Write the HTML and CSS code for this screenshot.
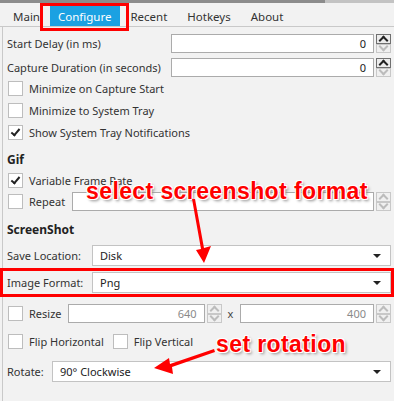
FILE: index.html
```html
<!DOCTYPE html>
<html lang="en">
<head>
    <meta charset="UTF-8">
    <title>Configure</title>
    <link rel="stylesheet" href="styles.css">
</head>
<body>
    <div class="topbar"></div>
    <div class="tabs">
        <span class="tab">Main</span>
        <span class="tab active">Configure</span>
        <span class="tab">Recent</span>
        <span class="tab">Hotkeys</span>
        <span class="tab">About</span>
    </div>

    <div class="panel">
        <div class="field">
            <label class="label wide">Start Delay (in ms)</label>
            <div class="number"><span class="value">0</span></div>
            <div class="spin"><span class="up"></span><span class="down"></span></div>
        </div>
        <div class="field gap">
            <label class="label wide">Capture Duration (in seconds)</label>
            <div class="number"><span class="value">0</span></div>
            <div class="spin"><span class="up"></span><span class="down"></span></div>
        </div>
        <div class="check"><span class="box"></span>Minimize on Capture Start</div>
        <div class="check"><span class="box"></span>Minimize to System Tray</div>
        <div class="check"><span class="box checked"></span>Show System Tray Notifications</div>

        <h3 class="heading">Gif</h3>
        <div class="check"><span class="box checked"></span>Variable Frame Rate</div>
        <div class="check repeat">
            <span class="box"></span><span class="check-text">Repeat</span>
            <div class="number disabled"></div>
            <div class="spin off"><span class="up"></span><span class="down"></span></div>
        </div>

        <h3 class="heading shot">ScreenShot</h3>
        <div class="field combo-row">
            <label class="label mid">Save Location:</label>
            <div class="combo">Disk</div>
        </div>
        <div class="highlight">
            <div class="field combo-row">
                <label class="label mid">Image Format:</label>
                <div class="combo">Png</div>
            </div>
        </div>
        <div class="check resize">
            <span class="box"></span><span class="check-text">Resize</span>
            <div class="number disabled small"><span class="value">640</span></div>
            <div class="spin off"><span class="up"></span><span class="down"></span></div>
            <span class="times">x</span>
            <div class="number disabled"><span class="value">400</span></div>
            <div class="spin off"><span class="up"></span><span class="down"></span></div>
        </div>
        <div class="check flips">
            <span class="box"></span><span class="check-text">Flip Horizontal</span>
            <span class="box second"></span><span class="check-text">Flip Vertical</span>
        </div>
        <div class="field combo-row rotate">
            <label class="label short">Rotate:</label>
            <div class="combo">90° Clockwise</div>
        </div>
    </div>

    <!-- annotations drawn over the screenshot -->
    <div class="tab-mark"></div>
    <div class="note note-format">select screenshot format</div>
    <div class="note note-rotate">set rotation</div>
    <svg class="arrows" width="394" height="401" viewBox="0 0 394 401">
        <polygon points="192,199 195,199 204,248 211,246 204,263 196,250 201,249" fill="#f00"/>
        <polygon points="214,349 215,352 172,367 173,374 154,368 169,358 170,364" fill="#f00"/>
    </svg>
</body>
</html>
```

FILE: styles.css
```css
body {
    margin: 0;
    width: 394px;
    height: 401px;
    overflow: hidden;
    position: relative;
    background-color: #f2f2f2;
    font-family: "Noto Sans", "Open Sans", sans-serif;
    font-size: 11px;
    color: #333;
}
.topbar {
    height: 3px;
    background: linear-gradient(to right, #8c8c8c 0, #8c8c8c 325px, #c3c3c3 325px);
}
.tabs {
    display: flex;
    height: 23px;
    align-items: flex-end;
    padding-left: 3px;
    border-bottom: 1px solid #c9c9c9;
    font-size: 11.5px;
}
.tab {
    padding: 0 10px;
    height: 20px;
    line-height: 22px;
    color: #333;
}
.tab.active {
    background-color: #1ba1e2;
    color: white;
    padding: 0 9px 0 8px;
}
.panel {
    border-left: 1px solid #c9c9c9;
    margin-left: 2px;
    padding: 7px 3px 0 4px;
    height: 380px;
}
.field {
    display: flex;
    align-items: center;
    height: 19px;
}
.field.gap {
    margin-top: 5px;
}
.label {
    flex: none;
}
.label.wide {
    width: 164px;
}
.label.mid {
    width: 85px;
}
.label.short {
    width: 45px;
}
.number {
    flex: 1;
    height: 17px;
    border: 1px solid #ababab;
    background: white;
    text-align: right;
    line-height: 17px;
    padding-right: 7px;
    color: #222;
}
.number.disabled {
    color: #8a8a8a;
}
.number.small {
    flex: none;
    width: 128px;
}
.spin {
    flex: none;
    width: 15px;
    height: 19px;
    margin-left: 2px;
    display: flex;
    flex-direction: column;
    justify-content: space-between;
}
.spin span {
    height: 8px;
    border: 1px solid #707070;
    background: #ececec;
    position: relative;
}
.spin span::after {
    content: "";
    position: absolute;
    left: 3px;
    top: 2px;
    width: 5px;
    height: 5px;
    border-left: 2px solid #222;
    border-top: 2px solid #222;
    transform: rotate(45deg);
}
.spin .down {
    border-color: #c8c8c8;
    background: #f0f0f0;
}
.spin .down::after {
    top: -2px;
    border-color: #bcbcbc;
    transform: rotate(225deg);
}
.spin.off .up {
    border-color: #c8c8c8;
    background: #f0f0f0;
}
.spin.off .up::after {
    border-color: #bcbcbc;
}
.check {
    display: flex;
    align-items: center;
    height: 22px;
    padding-left: 1px;
}
.box {
    flex: none;
    width: 13px;
    height: 13px;
    border: 1px solid #bdbdbd;
    background: white;
    margin-right: 6px;
    position: relative;
}
.box.checked::after {
    content: "";
    position: absolute;
    left: 4px;
    top: 1px;
    width: 3px;
    height: 7px;
    border-right: 2px solid #222;
    border-bottom: 2px solid #222;
    transform: rotate(40deg);
}
.box.second {
    margin-left: 9px;
}
.heading {
    margin: 0;
    padding-top: 9px;
    height: 17px;
    line-height: 16px;
    font-size: 12px;
    font-weight: bold;
    color: #222;
}
.heading.shot {
    padding-top: 10px;
    height: 23px;
}
.repeat {
    height: 21px;
}
.repeat .number {
    margin-left: 7px;
}
.combo-row {
    height: 21px;
}
.combo {
    flex: 1;
    height: 19px;
    line-height: 19px;
    border: 1px solid #c3c3c3;
    background: white;
    padding-left: 7px;
    color: #222;
    position: relative;
}
.combo::after {
    content: "";
    position: absolute;
    right: 9px;
    top: 8px;
    border-left: 4px solid transparent;
    border-right: 4px solid transparent;
    border-top: 4px solid #222;
}
.highlight {
    margin: 2px -3px 0 -7px;
    padding: 1px 0 1px 4px;
    border: 3px solid #f00;
}
.resize {
    margin-top: 6px;
    height: 21px;
}
.resize .number {
    margin-left: 6px;
}
.times {
    width: 14px;
    margin-left: 2px;
    text-align: center;
    color: #444;
}
.resize .times + .number {
    margin-left: 2px;
}
.flips {
    margin-top: 6px;
}
.rotate {
    margin-top: 9px;
}
.tab-mark {
    position: absolute;
    left: 40px;
    top: 3px;
    width: 83px;
    height: 22px;
    border: 3px solid #f00;
}
.note {
    position: absolute;
    font-family: "Liberation Sans", Arial, sans-serif;
    font-weight: bold;
    font-size: 23px;
    letter-spacing: 0.4px;
    color: #f00;
    white-space: nowrap;
    text-shadow: -1px -1px 0 #fff, 1px -1px 0 #fff, -1px 1px 0 #fff, 1px 1px 0 #fff, 2px 2px 3px #888;
}
.note-format {
    left: 86px;
    top: 178px;
}
.note-rotate {
    left: 216px;
    top: 331px;
}
.arrows {
    position: absolute;
    left: 0;
    top: 0;
}
```
